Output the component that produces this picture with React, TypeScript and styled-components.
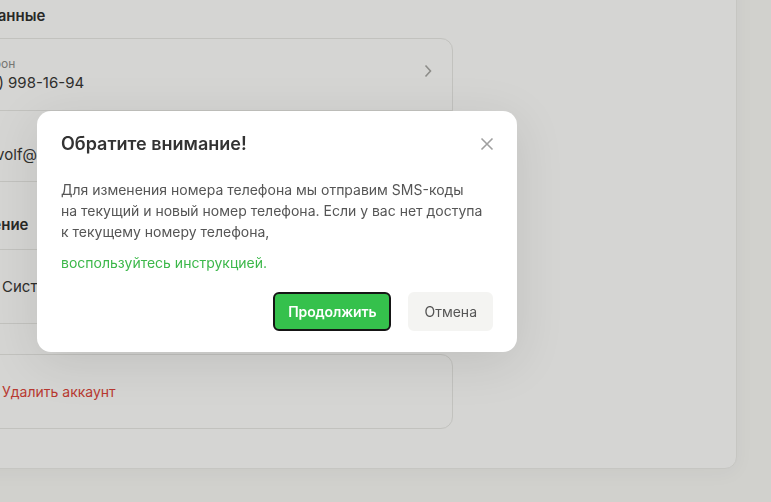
import React from 'react'
import styled, { createGlobalStyle } from 'styled-components'
import { Monitor, Trash2 } from 'lucide-react'

const Global = createGlobalStyle`
    html, body {
        margin: 0;
        padding: 0;
        background: #fafaf8;
        font-family: Inter, "Noto Sans", sans-serif;
        overflow: hidden;
    }
    * { box-sizing: border-box; }
`

const App: React.FC = () => {
    return (
        <>
            <Global />
            <Page>
                <Panel>
                    <SectionTitle>Личные данные</SectionTitle>
                    <Card>
                        <Row>
                            <Field>
                                <Label>Телефон</Label>
                                <Value>(999) 998-16-94</Value>
                            </Field>
                            <Chevron viewBox="0 0 8 14">
                                <path d="M1.5 1.5 L6.5 7 L1.5 12.5" />
                            </Chevron>
                        </Row>
                        <Row>
                            <Field>
                                <Label>Email</Label>
                                <Value>den.volf@mail.ru</Value>
                            </Field>
                        </Row>
                    </Card>
                    <SectionTitle>Отображение</SectionTitle>
                    <Card>
                        <Row tall>
                            <IconSlot><Monitor size={20} /></IconSlot>
                            <Value>Системная</Value>
                        </Row>
                    </Card>
                    <Card>
                        <Row tall>
                            <IconSlot><Trash2 size={20} color="#e53935" /></IconSlot>
                            <Value danger>Удалить аккаунт</Value>
                        </Row>
                    </Card>
                </Panel>
            </Page>
            <Overlay>
                <Modal>
                    <ModalHead>
                        <ModalTitle>Обратите внимание!</ModalTitle>
                        <Close aria-label="Закрыть">
                            <svg viewBox="0 0 14 14" width="14" height="14">
                                <path d="M1.5 1.5 L12.5 12.5 M12.5 1.5 L1.5 12.5" />
                            </svg>
                        </Close>
                    </ModalHead>
                    <Text>
                        Для изменения номера телефона мы отправим SMS-коды<br />
                        на текущий и новый номер телефона. Если у вас нет доступа<br />
                        к текущему номеру телефона,
                    </Text>
                    <Link href="#">воспользуйтесь инструкцией.</Link>
                    <Actions>
                        <Button primary>Продолжить</Button>
                        <Button>Отмена</Button>
                    </Actions>
                </Modal>
            </Overlay>
        </>
    )
}

const Page = styled.div`
    width: 771px;
    height: 502px;
    overflow: hidden;
`
const Panel = styled.div`
    width: 837px;
    margin: -30px 0 0 -100px;
    padding: 35px 283px 39px 24px;
    background: #ffffff;
    border: 1px solid #ededeb;
    border-radius: 12px;
    box-shadow: 0 4px 20px rgba(0, 0, 0, 0.04);
    display: flex;
    flex-direction: column;
`
const SectionTitle = styled.div`
    font-size: 15px;
    font-weight: 600;
    line-height: 20px;
    color: #2b2b2b;
    margin-bottom: 12px;
    &:not(:first-child) {
        margin-top: 33px;
        margin-bottom: 14px;
    }
`
const Card = styled.div`
    border: 1px solid #e8e8e6;
    border-radius: 12px;
    background: #ffffff;
    & + & { margin-top: 30px; }
`
const Row = styled.div<{ tall?: boolean }>`
    height: ${p => (p.tall ? '73px' : '71px')};
    padding: 0 20px 0 39px;
    display: flex;
    align-items: center;
    gap: 13px;
    & + & { border-top: 1px solid #e8e8e6; }
`
const Field = styled.div`
    flex: 1;
    display: flex;
    flex-direction: column;
    gap: 2px;
`
const Label = styled.div`
    font-size: 12px;
    line-height: 15px;
    color: #8a8a88;
`
const Value = styled.div<{ danger?: boolean }>`
    font-size: ${p => (p.danger ? '14px' : '15px')};
    line-height: 20px;
    color: ${p => (p.danger ? '#dc3f38' : '#333333')};
`
const IconSlot = styled.span`
    width: 24px;
    display: flex;
    justify-content: center;
    color: #777;
`
const Chevron = styled.svg`
    width: 8px;
    height: 14px;
    fill: none;
    stroke: #a6a6a4;
    stroke-width: 1.6;
    margin: -8px 0 0 0;
`
const Overlay = styled.div`
    position: fixed;
    inset: 0;
    background: rgba(30, 30, 20, 0.19);
`
const Modal = styled.div`
    position: absolute;
    left: 37px;
    top: 111px;
    width: 480px;
    padding: 22px 24px 21px;
    background: #ffffff;
    border-radius: 14px;
    box-shadow: 0 10px 50px rgba(0, 0, 0, 0.1);
    display: flex;
    flex-direction: column;
`
const ModalHead = styled.div`
    display: flex;
    align-items: center;
    justify-content: space-between;
    margin-bottom: 24px;
`
const ModalTitle = styled.div`
    font-size: 18px;
    font-weight: 600;
    line-height: 22px;
    color: #333333;
`
const Close = styled.button`
    width: 20px;
    height: 20px;
    margin-right: -4px;
    padding: 0;
    border: 0;
    background: none;
    display: flex;
    align-items: center;
    justify-content: center;
    svg {
        fill: none;
        stroke: #a0a0a0;
        stroke-width: 1.6;
    }
`
const Text = styled.p`
    margin: 0 0 10px;
    font-size: 14px;
    line-height: 21px;
    color: #555555;
`
const Link = styled.a`
    font-size: 14px;
    line-height: 21px;
    color: #3cb84a;
    text-decoration: none;
`
const Actions = styled.div`
    display: flex;
    justify-content: flex-end;
    gap: 17px;
    margin-top: 19px;
`
const Button = styled.button<{ primary?: boolean }>`
    height: 39px;
    padding: 0 ${p => (p.primary ? '13px' : '14px')};
    border-radius: 6px;
    font-family: inherit;
    font-size: 14px;
    font-weight: ${p => (p.primary ? 600 : 400)};
    letter-spacing: ${p => (p.primary ? '-0.1px' : '0')};
    color: ${p => (p.primary ? '#ffffff' : '#555555')};
    background: ${p => (p.primary ? '#35c14c' : '#f4f4f2')};
    border: 2px solid ${p => (p.primary ? '#151515' : '#f4f4f2')};
`

export default App
